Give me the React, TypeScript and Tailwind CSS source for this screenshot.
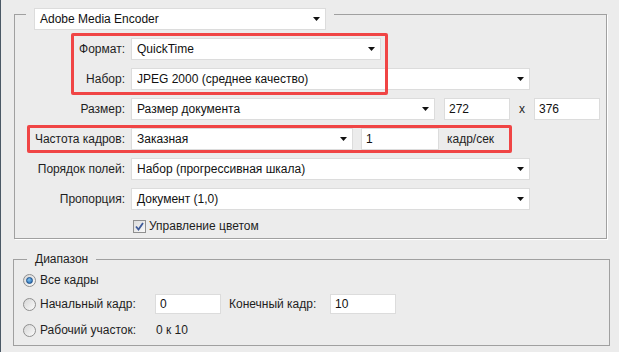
import React from "react";

const Arrow = () => (
  <svg width="7" height="4" viewBox="0 0 7 4" className="shrink-0">
    <polygon points="0,0 7,0 3.5,4" fill="#111" />
  </svg>
);

const Select = ({ w, text }: { w: string; text: string }) => (
  <div
    className={`${w} h-[22px] shrink-0 bg-white border border-[#dcdcdc] flex items-center justify-between pl-[5px] pr-[5px] text-[#111]`}
  >
    <span className="whitespace-nowrap">{text}</span>
    <Arrow />
  </div>
);

const Input = ({ w, h, text }: { w: string; h: string; text: string }) => (
  <div
    className={`${w} ${h} shrink-0 bg-white border border-[#dcdcdc] flex items-center pl-[4px] text-[#111]`}
  >
    {text}
  </div>
);

const Label = ({ text }: { text: string }) => (
  <div className="w-[111px] shrink-0 text-right pr-[1px] text-[#1e1e1e] whitespace-nowrap">
    {text}
  </div>
);

const Row = ({ label, children }: { label: string; children: React.ReactNode }) => (
  <div className="flex items-center h-[22px]">
    <Label text={label} />
    <div className="ml-[5px] flex items-center">{children}</div>
  </div>
);

const Radio = ({ checked }: { checked?: boolean }) => (
  <div className="w-[13px] h-[13px] shrink-0 rounded-full border border-[#8f8f8f] bg-gradient-to-br from-[#d6d6d6] to-[#fbfbfb] flex items-center justify-center">
    {checked && (
      <div className="w-[7px] h-[7px] rounded-full bg-[radial-gradient(circle_at_40%_35%,#7fc2f0,#1d5fa8)] border border-[#1b4f8a]" />
    )}
  </div>
);

const Checkbox = () => (
  <div className="w-[13px] h-[13px] shrink-0 border border-[#8f8f8f] bg-gradient-to-br from-[#dcdcdc] to-[#f8f8f8] flex items-center justify-center">
    <svg width="9" height="9" viewBox="0 0 9 9">
      <path d="M1 4.5 L3.5 7.5 L8 1" fill="none" stroke="#3e5a99" strokeWidth="1.8" />
    </svg>
  </div>
);

export default function App() {
  return (
    <div
      className="relative w-[619px] h-[352px] bg-[#ececec] border-l border-[#4b5966] overflow-hidden text-[12px] leading-[14px]"
      style={{ fontFamily: '"Liberation Sans", Arial, sans-serif' }}
    >
      {/* Upper group */}
      <div className="mt-[14px] ml-[13px] w-[593px] h-[225px] border border-[#a0a0a0] shadow-[1px_1px_0_#ffffff]">
        <div className="-mt-[7px] ml-[11px] px-[8px] w-fit bg-[#ececec]">
          <Select w="w-[292px]" text="Adobe Media Encoder" />
        </div>
        <div className="mt-[8px] flex flex-col gap-[8px]">
          <Row label="Формат:">
            <Select w="w-[250px]" text="QuickTime" />
          </Row>
          <Row label="Набор:">
            <Select w="w-[399px]" text="JPEG 2000 (среднее качество)" />
          </Row>
          <Row label="Размер:">
            <Select w="w-[304px]" text="Размер документа" />
            <div className="ml-[9px]">
              <Input w="w-[66px]" h="h-[22px]" text="272" />
            </div>
            <div className="w-[24px] text-center text-[#1e1e1e]">x</div>
            <Input w="w-[66px]" h="h-[22px]" text="376" />
          </Row>
          <Row label="Частота кадров:">
            <Select w="w-[222px]" text="Заказная" />
            <div className="ml-[8px]">
              <Input w="w-[78px]" h="h-[22px]" text="1" />
            </div>
            <div className="ml-[8px] text-[#1e1e1e]">кадр/сек</div>
          </Row>
          <Row label="Порядок полей:">
            <Select w="w-[399px]" text="Набор (прогрессивная шкала)" />
          </Row>
          <Row label="Пропорция:">
            <Select w="w-[399px]" text="Документ (1,0)" />
          </Row>
        </div>
        <div className="mt-[9px] ml-[118px] flex items-center">
          <Checkbox />
          <span className="ml-[3px] text-[#1e1e1e]">Управление цветом</span>
        </div>
      </div>

      {/* Range group */}
      <fieldset className="mt-[13px] ml-[12px] w-[597px] h-[94px] border border-[#a0a0a0]">
        <legend className="ml-[13px] px-[8px] leading-[14px] text-[#1e1e1e]">Диапазон</legend>
        <div className="flex flex-col">
          <div className="mt-[4px] h-[20px] flex items-center ml-[9px]">
            <Radio checked />
            <span className="ml-[4px] text-[#1e1e1e]">Все кадры</span>
          </div>
          <div className="mt-[4px] h-[20px] flex items-center ml-[9px]">
            <Radio />
            <span className="ml-[4px] w-[115px] text-[#1e1e1e]">Начальный кадр:</span>
            <Input w="w-[66px]" h="h-[20px]" text="0" />
            <span className="ml-[8px] w-[101px] text-[#1e1e1e]">Конечный кадр:</span>
            <Input w="w-[66px]" h="h-[20px]" text="10" />
          </div>
          <div className="mt-[6px] h-[20px] flex items-center ml-[9px]">
            <Radio />
            <span className="ml-[4px] w-[116px] text-[#1e1e1e]">Рабочий участок:</span>
            <span className="text-[#1e1e1e]">0 к 10</span>
          </div>
        </div>
      </fieldset>

      {/* Annotation highlights */}
      <div className="absolute left-[70px] top-[33px] w-[317px] h-[62px] border-[3px] border-[#f04545] rounded-[2px]" />
      <div className="absolute left-[26px] top-[125px] w-[485px] h-[28px] border-[3px] border-[#f04545] rounded-[2px]" />
    </div>
  );
}
